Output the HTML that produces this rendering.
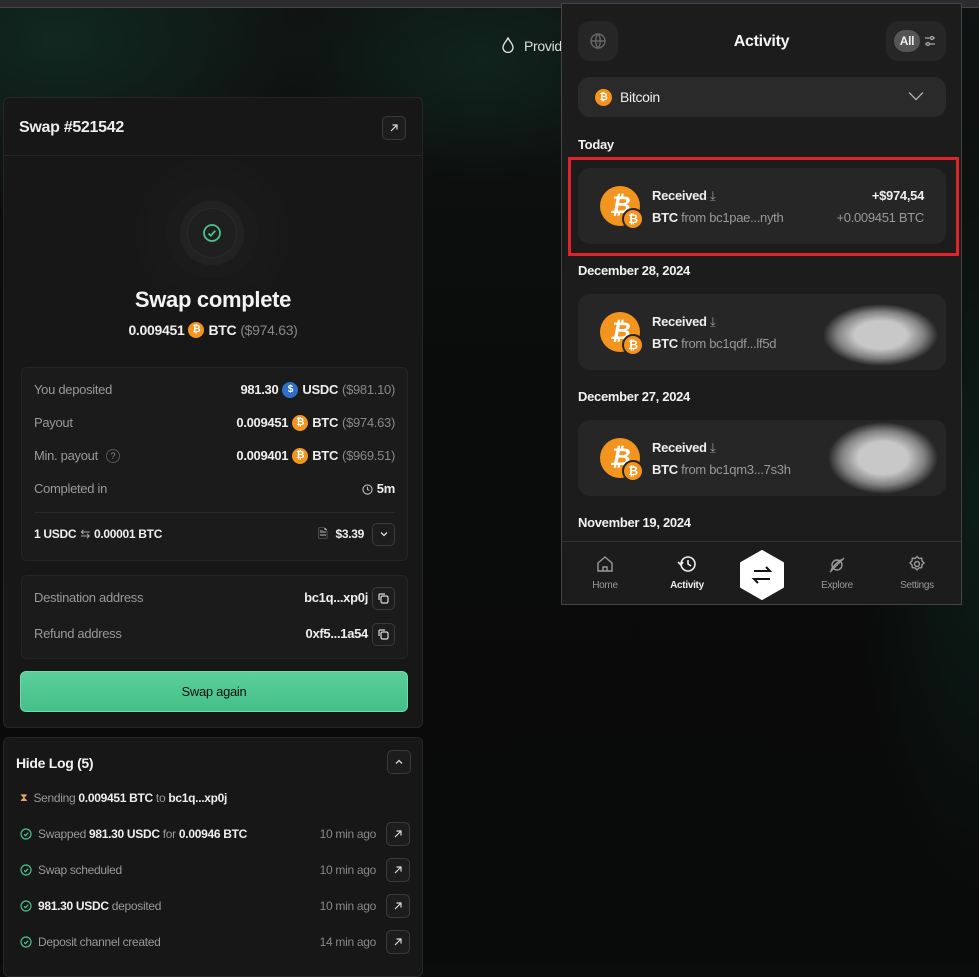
<!DOCTYPE html>
<html><head><style>
*{box-sizing:border-box;margin:0;padding:0}
body{width:979px;height:965px;overflow:hidden;background:#0b0c0c;font-family:"Liberation Sans",sans-serif;color:#eee;position:relative;letter-spacing:-0.3px}
.abs{position:absolute}
.bg{left:0;top:0;width:979px;height:965px;background:radial-gradient(ellipse 260px 160px at 60px 40px,#112820,transparent),radial-gradient(ellipse 200px 120px at 480px 60px,#0f241c,transparent),radial-gradient(ellipse 120px 400px at 979px 500px,#0c1d17,transparent),linear-gradient(#0f1312,#0a0b0b 40%,#090a0a)}
.topbar{left:0;top:0;width:979px;height:8px;background:#2b2b30;border-bottom:1px solid #444}
.card{background:#171717;border:1px solid #262626;border-radius:6px}
.box{background:#1b1b1b;border:1px solid #242424;border-radius:6px}
.sb{width:24px;height:24px;border:1px solid #3a3a3a;border-radius:5px;background:#1d1d1d;display:flex;align-items:center;justify-content:center}
.row{position:absolute;left:12px;right:12px;display:flex;justify-content:space-between;align-items:center;font-size:13px;line-height:18px;height:18px}
.row>span{display:flex;align-items:center;gap:4px}
.lab{color:#999}
.b{color:#eee;font-weight:bold}
.g{color:#888}
.coin{display:inline-block;width:16px;height:16px;border-radius:50%;background:#f3941f;color:#fff;font-size:10px;font-weight:bold;text-align:center;line-height:16px}
.lr{position:absolute;left:16px;right:12px;display:flex;align-items:center;font-size:12px;height:24px}
.ck{width:12px;height:12px;margin-right:6px}
.date{position:absolute;left:16px;font-size:13px;font-weight:bold;color:#f2f2f2}
.tx{position:absolute;left:16px;width:368px;height:76px;background:#262626;border-radius:12px}
.big{position:absolute;left:22px;top:18px;width:40px;height:40px;border-radius:50%;background:#f3941f;color:#fff;font-weight:bold;font-size:24px;text-align:center;line-height:40px;font-style:italic}
.sm{position:absolute;left:44px;top:40px;width:22px;height:22px;border-radius:50%;background:#f3941f;border:2px solid #262626;color:#fff;font-size:12px;font-weight:bold;text-align:center;line-height:18px}
.t1{position:absolute;left:74px;top:20px;font-size:13px;font-weight:bold;color:#eee}
.t2{position:absolute;left:74px;top:42px;font-size:13px;color:#999}
.t2 b{color:#eee}
.nav{position:absolute;top:576px;font-size:10px;color:#999;text-align:center;width:60px}
.blob{position:absolute;border-radius:50%;background:radial-gradient(closest-side,#c8c8c8 45%,rgba(190,190,190,.6) 75%,transparent)}
</style></head><body>
<div class="abs bg"></div>
<div class="abs topbar"></div>
<svg class="abs" style="left:501px;top:37px" width="14" height="16" viewBox="0 0 14 16"><path d="M7 1C5 5 2 7 2 10.5a5 5 0 0 0 10 0C12 7 9 5 7 1z" fill="none" stroke="#ddd" stroke-width="1.4"/></svg>
<div class="abs" style="left:524px;top:38px;font-size:14px;color:#ddd">Provid</div>

<!-- swap card -->
<div class="abs card" style="left:3px;top:97px;width:420px;height:631px">
  <div class="abs" style="left:15px;top:21px;font-size:16px;font-weight:bold;color:#eee">Swap #521542</div>
  <div class="abs sb" style="left:378px;top:18px"><svg width="10" height="10" viewBox="0 0 10 10"><path d="M2 8L8 2M3.5 2H8V6.5" fill="none" stroke="#ddd" stroke-width="1.2"/></svg></div>
  <div class="abs" style="left:0;right:0;top:57px;border-top:1px solid #262626"></div>
  <div class="abs" style="left:128px;top:55px;width:160px;height:160px;border-radius:50%;background:radial-gradient(circle,#222 0 28%,#1b1b1b 29% 40%,#191919 41% 55%,transparent 70%)"></div>
  <div class="abs" style="left:183px;top:110px;width:50px;height:50px;border-radius:50%;background:#1f1f1f;border:1px solid #2a2a2a"></div>
  <svg class="abs" style="left:198px;top:125px" width="20" height="20" viewBox="0 0 20 20"><circle cx="10" cy="10" r="8" fill="none" stroke="#4cc38a" stroke-width="1.8"/><path d="M6.5 10.5l2.3 2.2 4.5-5" fill="none" stroke="#4cc38a" stroke-width="1.8"/></svg>
  <div class="abs" style="left:0;right:0;top:189px;text-align:center;font-size:22px;font-weight:bold;color:#f4f4f4">Swap complete</div>
  <div class="abs" style="left:0;right:0;top:224px;display:flex;justify-content:center;align-items:center;gap:4px;font-size:14px"><span class="b">0.009451</span><span class="coin">₿</span><span class="b">BTC</span><span class="g">($974.63)</span></div>
  <div class="abs box" style="left:17px;top:269px;width:387px;height:194px">
    <div class="row" style="top:13px"><span class="lab">You deposited</span><span><span class="b">981.30</span><span class="coin" style="background:#2f6fc9">$</span><span class="b">USDC</span><span class="g">($981.10)</span></span></div>
    <div class="row" style="top:46px"><span class="lab">Payout</span><span><span class="b">0.009451</span><span class="coin">₿</span><span class="b">BTC</span><span class="g">($974.63)</span></span></div>
    <div class="row" style="top:79px"><span class="lab">Min. payout <span style="display:inline-block;width:14px;height:14px;border:1px solid #555;border-radius:50%;font-size:9px;text-align:center;line-height:12px;color:#888;margin-left:4px">?</span></span><span><span class="b">0.009401</span><span class="coin">₿</span><span class="b">BTC</span><span class="g">($969.51)</span></span></div>
    <div class="row" style="top:112px"><span class="lab">Completed in</span><span><svg width="11" height="11" viewBox="0 0 12 12" fill="none" stroke="#bbb" stroke-width="1.2"><circle cx="6" cy="6" r="5"/><path d="M6 3v3l2 1"/></svg><span class="b">5m</span></span></div>
    <div class="abs" style="left:12px;right:12px;top:144px;border-top:1px solid #2a2a2a"></div>
    <div class="row" style="top:157px;font-size:12px"><span class="b">1 USDC <span style="color:#aaa;font-weight:normal">⇆</span> 0.00001 BTC</span><span style="display:flex;align-items:center;gap:8px"><span style="color:#bbb">🗎</span><span class="b">$3.39</span><span class="sb" style="width:23px;height:23px"><svg width="10" height="8" viewBox="0 0 10 8"><path d="M2 2.5l3 3 3-3" fill="none" stroke="#ddd" stroke-width="1.3"/></svg></span></span></div>
  </div>
  <div class="abs box" style="left:17px;top:477px;width:387px;height:84px">
    <div class="row" style="top:13px"><span class="lab">Destination address</span><span style="display:flex;align-items:center;gap:4px"><span class="b">bc1q...xp0j</span><span class="sb" style="width:23px;height:23px"><svg width="11" height="11" viewBox="0 0 11 11"><rect x="3" y="3" width="7" height="7" rx="1.5" fill="none" stroke="#ddd" stroke-width="1.2"/><path d="M1 7V2a1 1 0 0 1 1-1h5" fill="none" stroke="#ddd" stroke-width="1.2"/></svg></span></span></div>
    <div class="row" style="top:49px"><span class="lab">Refund address</span><span style="display:flex;align-items:center;gap:4px"><span class="b">0xf5...1a54</span><span class="sb" style="width:23px;height:23px"><svg width="11" height="11" viewBox="0 0 11 11"><rect x="3" y="3" width="7" height="7" rx="1.5" fill="none" stroke="#ddd" stroke-width="1.2"/><path d="M1 7V2a1 1 0 0 1 1-1h5" fill="none" stroke="#ddd" stroke-width="1.2"/></svg></span></span></div>
  </div>
  <div class="abs" style="left:16px;top:573px;width:388px;height:41px;border-radius:6px;background:linear-gradient(#5bcf9a,#44bf88);border:1px solid #6fdcaa;text-align:center;line-height:39px;font-size:13px;color:#111">Swap again</div>
</div>

<!-- log card -->
<div class="abs card" style="left:3px;top:737px;width:420px;height:240px">
  <div class="abs" style="left:12px;top:17px;font-size:14px;font-weight:bold;color:#f2f2f2">Hide Log (5)</div>
  <div class="abs sb" style="left:383px;top:12px"><svg width="10" height="8" viewBox="0 0 10 8"><path d="M2 5.5l3-3 3 3" fill="none" stroke="#ddd" stroke-width="1.3"/></svg></div>
  <div class="lr" style="top:48px"><span style="color:#e6a56a;margin-right:6px;font-size:11px">⧗</span><span class="lab">Sending&nbsp;</span><span class="b">0.009451 BTC</span><span class="lab">&nbsp;to&nbsp;</span><span class="b">bc1q...xp0j</span></div>
  <div class="lr" style="top:84px"><svg class="ck" viewBox="0 0 12 12" fill="none" stroke="#4cc38a" stroke-width="1.2"><circle cx="6" cy="6" r="5"/><path d="M4 6.2l1.5 1.5 2.7-3"/></svg><span class="lab">Swapped&nbsp;</span><span class="b">981.30 USDC</span><span class="lab">&nbsp;for&nbsp;</span><span class="b">0.00946 BTC</span><span style="margin-left:auto;color:#888;margin-right:10px">10 min ago</span><span class="sb"><svg width="10" height="10" viewBox="0 0 10 10"><path d="M2 8L8 2M3.5 2H8V6.5" fill="none" stroke="#ddd" stroke-width="1.2"/></svg></span></div>
  <div class="lr" style="top:120px"><svg class="ck" viewBox="0 0 12 12" fill="none" stroke="#4cc38a" stroke-width="1.2"><circle cx="6" cy="6" r="5"/><path d="M4 6.2l1.5 1.5 2.7-3"/></svg><span class="lab">Swap scheduled</span><span style="margin-left:auto;color:#888;margin-right:10px">10 min ago</span><span class="sb"><svg width="10" height="10" viewBox="0 0 10 10"><path d="M2 8L8 2M3.5 2H8V6.5" fill="none" stroke="#ddd" stroke-width="1.2"/></svg></span></div>
  <div class="lr" style="top:156px"><svg class="ck" viewBox="0 0 12 12" fill="none" stroke="#4cc38a" stroke-width="1.2"><circle cx="6" cy="6" r="5"/><path d="M4 6.2l1.5 1.5 2.7-3"/></svg><span class="b">981.30 USDC</span><span class="lab">&nbsp;deposited</span><span style="margin-left:auto;color:#888;margin-right:10px">10 min ago</span><span class="sb"><svg width="10" height="10" viewBox="0 0 10 10"><path d="M2 8L8 2M3.5 2H8V6.5" fill="none" stroke="#ddd" stroke-width="1.2"/></svg></span></div>
  <div class="lr" style="top:192px"><svg class="ck" viewBox="0 0 12 12" fill="none" stroke="#4cc38a" stroke-width="1.2"><circle cx="6" cy="6" r="5"/><path d="M4 6.2l1.5 1.5 2.7-3"/></svg><span class="lab">Deposit channel created</span><span style="margin-left:auto;color:#888;margin-right:10px">14 min ago</span><span class="sb"><svg width="10" height="10" viewBox="0 0 10 10"><path d="M2 8L8 2M3.5 2H8V6.5" fill="none" stroke="#ddd" stroke-width="1.2"/></svg></span></div>
</div>

<!-- activity panel -->
<div class="abs" style="left:561px;top:3px;width:401px;height:602px;background:#1c1c1c;border:1px solid #444;overflow:hidden">
  <div class="abs" style="left:16px;top:17px;width:40px;height:40px;border-radius:12px;background:#262626"></div>
  <svg class="abs" style="left:27px;top:28px" width="18" height="18" viewBox="0 0 18 18" fill="none" stroke="#666" stroke-width="1.4"><circle cx="9" cy="9" r="7"/><path d="M2 9h14M9 2c-3 3-3 11 0 14M9 2c3 3 3 11 0 14"/></svg>
  <div class="abs" style="left:0;right:0;top:29px;text-align:center;font-size:16px;font-weight:bold;color:#f4f4f4">Activity</div>
  <div class="abs" style="left:324px;top:17px;width:60px;height:40px;border-radius:12px;background:#262626"></div>
  <div class="abs" style="left:332px;top:26px;width:26px;height:22px;border-radius:11px;background:#555;font-size:12px;font-weight:bold;text-align:center;line-height:22px;color:#eee">All</div>
  <svg class="abs" style="left:362px;top:31px" width="12" height="12" viewBox="0 0 12 12" stroke="#aaa" stroke-width="1.2"><path d="M1 3h10M1 9h10"/><circle cx="8" cy="3" r="1.5" fill="#262626"/><circle cx="4" cy="9" r="1.5" fill="#262626"/></svg>
  <div class="abs" style="left:16px;top:73px;width:368px;height:40px;border-radius:12px;background:#2a2a2a"></div>
  <div class="abs coin" style="left:33px;top:85px;width:17px;height:17px;line-height:17px">₿</div>
  <div class="abs" style="left:58px;top:85px;font-size:14px;color:#eee">Bitcoin</div>
  <svg class="abs" style="left:346px;top:87px" width="16" height="10" viewBox="0 0 16 10"><path d="M1 1.5l7 7 7-7" fill="none" stroke="#aaa" stroke-width="1.4"/></svg>
  <div class="date" style="top:133px">Today</div>
  <div class="tx" style="top:164px"><div class="big">₿</div><div class="sm">₿</div><div class="t1">Received <span style="color:#999;font-weight:normal">⤓</span></div><div class="t2"><b>BTC</b> from bc1pae...nyth</div><div class="abs" style="right:22px;top:20px;font-size:13px;font-weight:bold;color:#eee">+$974,54</div><div class="abs" style="right:22px;top:42px;font-size:13px;color:#999">+0.009451 BTC</div></div>
  <div class="abs" style="left:6px;top:153px;width:391px;height:99px;border:3px solid #e1222b"></div>
  <div class="date" style="top:259px">December 28, 2024</div>
  <div class="tx" style="top:290px"><div class="big">₿</div><div class="sm">₿</div><div class="t1">Received <span style="color:#999;font-weight:normal">⤓</span></div><div class="t2"><b>BTC</b> from bc1qdf...lf5d</div><div class="blob" style="left:245px;top:10px;width:115px;height:62px"></div></div>
  <div class="date" style="top:385px">December 27, 2024</div>
  <div class="tx" style="top:416px"><div class="blob" style="left:250px;top:2px;width:110px;height:72px"></div><div class="big">₿</div><div class="sm">₿</div><div class="t1">Received <span style="color:#999;font-weight:normal">⤓</span></div><div class="t2"><b>BTC</b> from bc1qm3...7s3h</div></div>
  <div class="date" style="top:511px">November 19, 2024</div>
  <div class="abs" style="left:0;right:0;top:537px;height:70px;background:#1c1c1c;border-top:1px solid #333"></div>
  <svg class="abs" style="left:34px;top:551px" width="18" height="18" viewBox="0 0 18 18" fill="none" stroke="#999" stroke-width="1.4"><path d="M2 8l7-6 7 6v8H2z"/><path d="M7 16v-4h4v4"/></svg>
  <div class="nav" style="left:13px">Home</div>
  <svg class="abs" style="left:115px;top:551px" width="20" height="18" viewBox="0 0 20 18" fill="none" stroke="#eee" stroke-width="1.6"><circle cx="11" cy="9" r="7"/><path d="M11 5v4l3 2M1 7l3 3 2-3"/></svg>
  <div class="nav" style="left:95px;color:#eee;font-weight:bold">Activity</div>
  <svg class="abs" style="left:177px;top:546px" width="46" height="50" viewBox="0 0 46 50"><path d="M23 1l21 12v24L23 49 2 37V13z" fill="#fff" stroke="#fff" stroke-width="2" stroke-linejoin="round"/><path d="M15 21h16l-4-4M31 29H15l4 4" fill="none" stroke="#111" stroke-width="2"/></svg>
  <svg class="abs" style="left:265px;top:551px" width="20" height="20" viewBox="0 0 20 20" fill="none" stroke="#999" stroke-width="1.4"><circle cx="10" cy="10" r="5"/><path d="M3 17L17 3"/><path d="M5 15C2 15 14 3 15 5"/></svg>
  <div class="nav" style="left:245px">Explore</div>
  <svg class="abs" style="left:346px;top:551px" width="18" height="18" viewBox="0 0 18 18" fill="none" stroke="#999" stroke-width="1.4"><circle cx="9" cy="9" r="2.5"/><path d="M9 1.5l2 2 2.7-.3.3 2.7 2 2-2 2-.3 2.7-2.7.3-2 2-2-2-2.7-.3-.3-2.7-2-2 2-2 .3-2.7 2.7.3z"/></svg>
  <div class="nav" style="left:325px">Settings</div>
</div>
</body></html>
